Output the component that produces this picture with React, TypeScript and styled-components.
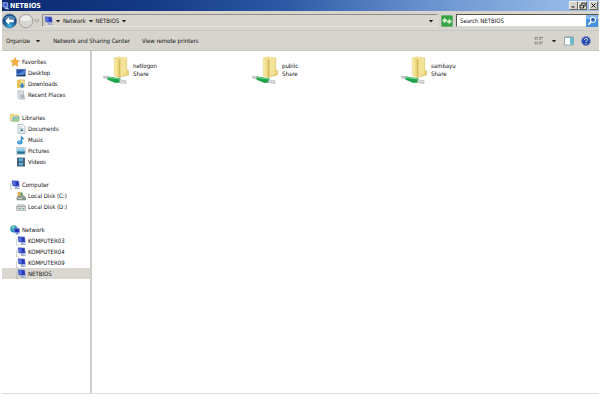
import React from "react";
import styled, { createGlobalStyle } from "styled-components";

const GlobalStyle = createGlobalStyle`
  * { box-sizing: border-box; }
  body { margin: 0; background: #fff; }
  body, button, input { font-family: "DejaVu Sans Condensed", "Noto Sans", sans-serif; font-size: 6px; color: #111; }
`;

const Window = styled.div`
  margin: 0 6px 0 2px;
  height: calc(100vh - 9px);
  display: flex;
  flex-direction: column;
  border-bottom: 1px solid #dcdcdc;
`;

const TitleBar = styled.header`
  height: 11px;
  flex: none;
  display: flex;
  align-items: center;
  padding: 0 1px 0 0;
  background: linear-gradient(90deg, #0c2a70 0%, #143a86 25%, #2f5ba6 48%, #6b94d0 72%, #9fc2ec 100%);
`;

const Title = styled.h1`
  margin: 0 auto 0 0;
  font-size: 7px;
  line-height: 10px;
  font-weight: 700;
  color: #fff;
`;

const WindowButton = styled.button<{ $apart?: boolean }>`
  width: 9px;
  height: 9px;
  padding: 0;
  margin-left: ${(p) => (p.$apart ? "2px" : "0")};
  display: grid;
  place-items: center;
  background: #d6d3cb;
  border: 1px solid;
  border-color: #f4f2ee #66635c #66635c #f4f2ee;
`;

const AddressRow = styled.div`
  height: 20px;
  flex: none;
  display: flex;
  align-items: center;
  background: #d7d4cd;
  border-bottom: 1px solid #c6c8c8;
`;

const IconButton = styled.button`
  padding: 0;
  border: 0;
  background: none;
  display: flex;
  align-items: center;
  justify-content: center;
  flex: none;
`;

const AddressBox = styled.nav`
  flex: 1;
  height: 13px;
  margin: 0 3px 0 2px;
  padding: 0 3px 0 0;
  display: flex;
  align-items: center;
  gap: 2px;
  border: 1px solid;
  border-color: #8f8e88 #dedbd4 #e6e3dd #8f8e88;
  background: #dad7d0;
`;

const Crumb = styled.a`
  color: inherit;
  text-decoration: none;
  line-height: 10px;
`;

const DropEnd = styled(IconButton)`
  margin-left: auto;
`;

const SearchBox = styled.div`
  width: 143px;
  height: 13px;
  margin-left: 3px;
  display: flex;
  align-items: center;
  border: 1px solid;
  border-color: #55544f #d8d8d4 #d8d8d4 #55544f;
  background: #fff;
`;

const SearchInput = styled.input`
  flex: 1;
  min-width: 0;
  padding: 0 3px;
  border: 0;
  outline: 0;
  background: none;
  line-height: 10px;
  &::placeholder { color: #111; opacity: 1; }
`;

const CommandBar = styled.div`
  height: 20px;
  flex: none;
  display: flex;
  align-items: center;
  padding: 0 8px 0 4px;
  gap: 12px;
  background: #d7d4cd;
  border-bottom: 1px solid #c9c6c0;
`;

const Command = styled.button`
  padding: 0;
  border: 0;
  background: none;
  display: flex;
  align-items: center;
  gap: 5px;
  line-height: 10px;
  white-space: nowrap;
`;

const Tools = styled.div`
  margin-left: auto;
  display: flex;
  align-items: center;
  gap: 7px;
`;

const Body = styled.div`
  flex: 1;
  display: flex;
  min-height: 0;
`;

const Sidebar = styled.nav`
  width: 90px;
  flex: none;
  padding-top: 5px;
  display: flex;
  flex-direction: column;
  gap: 12px;
  border-right: 2px solid #cfcdca;
`;

const List = styled.ul`
  list-style: none;
  margin: 0;
  padding: 0;
`;

const TreeLink = styled.a<{ $level: number; $selected?: boolean }>`
  height: 11px;
  padding-left: ${(p) => (p.$level ? "14px" : "8px")};
  display: flex;
  align-items: center;
  gap: 2px;
  line-height: 11px;
  color: inherit;
  text-decoration: none;
  white-space: nowrap;
  background: ${(p) => (p.$selected ? "#d9d7d0" : "transparent")};
`;

const Content = styled.main`
  flex: 1;
  padding: 3px 11px;
`;

const ShareGrid = styled(List)`
  display: grid;
  grid-template-columns: repeat(auto-fill, 149px);
`;

const ShareLink = styled.a`
  display: flex;
  align-items: center;
  gap: 2px;
  height: 31px;
  color: inherit;
  text-decoration: none;
  line-height: 8px;
`;

const ShareText = styled.span`
  display: flex;
  flex-direction: column;
`;

const Svg = styled.svg<{ $size?: number }>`
  width: ${(p) => p.$size ?? 10}px;
  height: ${(p) => p.$size ?? 10}px;
  flex: none;
  display: block;
`;

const Arrow = ({ outline = false }: { outline?: boolean }) => (
  <Svg $size={6} viewBox="0 0 6 6" aria-hidden>
    <path d="M.8 2h4.4L3 4.6z" fill={outline ? "#f2f1ee" : "#222"} stroke={outline ? "#77756f" : "none"} strokeWidth=".6" />
  </Svg>
);

const Monitor = () => (
  <>
    <path d="M.7 2.8v6.5M.4 9.3h1.8" stroke="#a8abae" strokeWidth=".6" fill="none" />
    <path d="M1.9.6l6.9.3.6 5.5-6.9-.4z" fill="#2438b8" stroke="#98a6d4" strokeWidth=".5" />
    <path d="M2.6 1.2l2.8.1.4 3.9-2.8-.2z" fill="#5670e4" />
    <path d="M5 6.3l2 .2.3.9 2.4.3-.3 1.4-4.8-.4z" fill="#98a4cc" />
  </>
);

type IconName =
  | "star" | "desktop" | "downloads" | "recent" | "libraries" | "document" | "music"
  | "pictures" | "videos" | "computer" | "diskC" | "diskD" | "network";

const shapes: Record<IconName, React.ReactNode> = {
  star: <path d="M5 .5l1.3 3 3.2.3-2.4 2.1.8 3.3L5 7.5 2.1 9.2l.8-3.3L.5 3.8l3.2-.3z" fill="#f7b03c" stroke="#d8872a" strokeWidth=".5" />,
  desktop: (
    <>
      <rect x=".5" y="1.2" width="9" height="7" fill="#2452a8" stroke="#7288ae" strokeWidth=".6" />
      <path d="M1 5.5C4 5.6 6 4 9 2v3.5L6 7H1z" fill="#4e88da" />
      <path d="M1 7.5h8" stroke="#1c3155" />
    </>
  ),
  downloads: (
    <>
      <path d="M1 1.2l3-.7v8L1 9.3z" fill="#e5c45a" />
      <path d="M4 .8h4.5v7.5L4 9z" fill="#f2dc87" stroke="#c9a949" strokeWidth=".4" />
      <path d="M5.2 4.2h2v2h1.5L6.2 9.5 3.6 6.2h1.6z" fill="#2a7ed2" />
    </>
  ),
  recent: (
    <>
      <path d="M2 .8h5.5v6.5L9 9H3L2 7z" fill="#e8eaec" stroke="#9ba0a5" strokeWidth=".6" />
      <path d="M3.2 2.6h3M3.2 4.2h2" stroke="#a9b1b8" strokeWidth=".6" />
      <circle cx="6.3" cy="6.5" r="2" fill="#c7d3dc" stroke="#858d94" strokeWidth=".5" />
      <path d="M6.3 5.3v1.3h1" stroke="#596470" strokeWidth=".5" fill="none" />
    </>
  ),
  libraries: (
    <>
      <path d="M.5 1h3.2l.7 1h4.4v6h-8.3z" fill="#f0d878" stroke="#cdb35c" strokeWidth=".4" />
      <path d="M2.6 3.4h7l-.7 5.4h-7z" fill="#74bedb" stroke="#e6dba0" strokeWidth=".5" />
      <path d="M3 7.2c2-2 3-2 5.7-1.8L8.3 8.3H2.6z" fill="#a4ce80" />
    </>
  ),
  document: (
    <>
      <path d="M2 .6h5l2 2v6.8H2z" fill="#fafcfc" stroke="#7c8f9b" strokeWidth=".6" />
      <path d="M3.3 3h2.4M3.3 4.6h4.2M3.3 7.8h4.2" stroke="#7fa0ae" strokeWidth=".6" />
      <path d="M4.4 5.4h2.8v1.6H4.4z" fill="#3c7c92" />
    </>
  ),
  music: (
    <>
      <path d="M5 .3c.4 2 3.4 2.2 3.2 5.2-.5-1.3-1.3-1.7-2-1.8v3.9H4.8V.3z" fill="#2480c4" />
      <ellipse cx="3.8" cy="7.3" rx="2.7" ry="2.1" fill="#3a9ad8" />
      <ellipse cx="3.3" cy="6.8" rx="1" ry=".6" fill="#a9daf4" />
    </>
  ),
  pictures: (
    <>
      <rect x=".5" y="1.5" width="9" height="7" fill="#f5f7f8" stroke="#9da9b0" strokeWidth=".5" />
      <rect x="1.3" y="2.3" width="7.4" height="5.4" fill="#8acbe8" />
      <path d="M1.3 5.4c2-.8 3.5 1 7.4-.3v2.6H1.3z" fill="#226a88" />
    </>
  ),
  videos: (
    <>
      <rect x="1" y=".6" width="8" height="8.8" fill="#28435d" />
      <path d="M2.9 1.2h4.2v3.3H2.9zM2.9 5.4h4.2v3.2H2.9z" fill="#60add8" />
      <path d="M1.9 1v8M8.1 1v8" stroke="#d5e2ea" strokeWidth=".7" strokeDasharray=".8 .8" />
    </>
  ),
  computer: <Monitor />,
  diskC: (
    <>
      <path d="M1 6.2l1.2-1.4h5.6L9.6 6.4v2.5H1z" fill="#9aa39c" stroke="#59625f" strokeWidth=".5" />
      <path d="M1.6 1.3l2.6-.7.2 3.8-2.6.5z" fill="#e2a849" />
      <path d="M4.5 1l2.5 1-.4 3-2.3-.5z" fill="#57a05c" />
      <path d="M2 7.6h4" stroke="#e8ece9" strokeWidth=".7" />
      <rect x="7.3" y="7" width="1.2" height="1" fill="#49b850" />
    </>
  ),
  diskD: (
    <>
      <path d="M.6 4.4l1.4-1.6h5.9l1.7 1.8v3.8h-9z" fill="#dfe1e2" stroke="#888e92" strokeWidth=".6" />
      <path d="M.8 4.6h8.6M2 6.6h3.4" stroke="#7d8589" strokeWidth=".7" />
      <rect x="6.7" y="6" width="1.5" height="1.2" fill="#4ca678" />
    </>
  ),
  network: (
    <>
      <circle cx="3.8" cy="3.8" r="3.6" fill="#2c93c2" />
      <path d="M1.4 2.2C3 .2 5 .8 5.2 1.6 5 3 3.2 2.6 3 4.2 2 4.4 1 3.5 1.4 2.2z" fill="#74cf9c" />
      <path d="M4.2 3.2l5.2.3.3 4.3-5.2-.3z" fill="#2032b4" stroke="#91a0d8" strokeWidth=".5" />
      <path d="M6 8h2l1 1.4H5.3z" fill="#8593bc" />
    </>
  ),
};

const Icon = ({ name }: { name: IconName }) => (
  <Svg viewBox="0 0 10 10" aria-hidden>{shapes[name]}</Svg>
);

const ShareIcon = () => (
  <Svg $size={28} viewBox="0 0 28 28" aria-hidden>
    <defs>
      <linearGradient id="folder" x1="0" x2="1">
        <stop offset="0" stopColor="#fbeeb0" />
        <stop offset=".55" stopColor="#f3df8a" />
        <stop offset="1" stopColor="#e3c766" />
      </linearGradient>
    </defs>
    <path d="M15.5 1l8.2 1v11.6l2 1.5v3.8l-10 2.7z" fill="#e9ce70" stroke="#d0b660" strokeWidth=".4" />
    <path d="M11.2 1.8L15.5.6l7.6 1.4.2 16-7.6 3.4z" fill="#f4e296" />
    <path d="M11.2 1.8l5.6 1.7v18.3l-5.6-2.4z" fill="url(#folder)" stroke="#dcc270" strokeWidth=".4" />
    <path d="M16.8 3.6v17.8" stroke="#bfa048" strokeWidth=".6" />
    <path d="M.4 20l6 .8v2.7L.6 22z" fill="#cdd2ce" stroke="#989f9a" strokeWidth=".4" />
    <path d="M4.6 20.6l12.8 1.6v4.4l-5 .3-7.8-3.2z" fill="#1ea54c" />
    <path d="M5 20.9l12.2 1.6v1.1L5 22z" fill="#71d68d" />
    <path d="M16.5 23.8l6.5 1 .1 2.6-6.4-.7z" fill="#dce0dd" stroke="#9ba29c" strokeWidth=".5" />
  </Svg>
);

type Entry = { label: string; icon: IconName; selected?: boolean };
const groups: Array<Entry & { children: Entry[] }> = [
  {
    label: "Favorites", icon: "star", children: [
      { label: "Desktop", icon: "desktop" },
      { label: "Downloads", icon: "downloads" },
      { label: "Recent Places", icon: "recent" },
    ],
  },
  {
    label: "Libraries", icon: "libraries", children: [
      { label: "Documents", icon: "document" },
      { label: "Music", icon: "music" },
      { label: "Pictures", icon: "pictures" },
      { label: "Videos", icon: "videos" },
    ],
  },
  {
    label: "Computer", icon: "computer", children: [
      { label: "Local Disk (C:)", icon: "diskC" },
      { label: "Local Disk (D:)", icon: "diskD" },
    ],
  },
  {
    label: "Network", icon: "network", children: [
      { label: "KOMPUTER03", icon: "computer" },
      { label: "KOMPUTER04", icon: "computer" },
      { label: "KOMPUTER09", icon: "computer" },
      { label: "NETBIOS", icon: "computer", selected: true },
    ],
  },
];
const shares = ["netlogon", "public", "sambayu"];

export default function App() {
  return (
    <>
      <GlobalStyle />
      <Window>
        <TitleBar>
          <Svg viewBox="0 0 10 10" $size={8} aria-hidden>
            <path d="M1 .8l6 .2.3 5.6-6-.4z" fill="#4260da" stroke="#d5def5" strokeWidth=".8" />
            <path d="M4 7h2l2.7 1-.4 1.3-5-.5z" fill="#b3bfdd" />
          </Svg>
          <Title>NETBIOS</Title>
          <WindowButton aria-label="Minimize">
            <Svg $size={7} viewBox="0 0 7 7"><path d="M1.5 5h3" stroke="#111" /></Svg>
          </WindowButton>
          <WindowButton aria-label="Restore">
            <Svg $size={7} viewBox="0 0 7 7"><path d="M2.7 2.5V1h3.5v3H5M1 3.2h3.5V6H1z" fill="none" stroke="#111" strokeWidth=".8" /></Svg>
          </WindowButton>
          <WindowButton $apart aria-label="Close">
            <Svg $size={7} viewBox="0 0 7 7"><path d="M1.5 1.5l4 4M5.5 1.5l-4 4" stroke="#111" /></Svg>
          </WindowButton>
        </TitleBar>

        <AddressRow>
          <IconButton aria-label="Back">
            <Svg $size={16} viewBox="0 0 16 16">
              <defs>
                <radialGradient id="back" cy=".85">
                  <stop offset="0" stopColor="#3cb4e6" />
                  <stop offset="1" stopColor="#174a86" />
                </radialGradient>
              </defs>
              <circle cx="7.6" cy="8" r="7.1" fill="url(#back)" stroke="#64809c" strokeWidth=".7" />
              <path d="M2 6a6 5 0 0 1 11.2 0C10 7.5 5 7.5 2 6z" fill="#7eb0d6" opacity=".6" />
              <path d="M3.2 8l4-3.7v2.4h4.7v2.6H7.2v2.4z" fill="#fff" />
            </Svg>
          </IconButton>
          <IconButton aria-label="Forward">
            <Svg $size={16} viewBox="0 0 16 16">
              <circle cx="8" cy="8" r="6.9" fill="#d7d6d3" stroke="#96958f" strokeWidth=".8" />
              <path d="M2.5 7a5.6 5.3 0 0 1 11 0C10 8.2 6 8.2 2.5 7z" fill="#f0efed" />
            </Svg>
          </IconButton>
          <IconButton aria-label="Recent pages"><Arrow outline /></IconButton>
          <AddressBox aria-label="Address">
            <Icon name="computer" />
            <Arrow />
            <Crumb href="#network">Network</Crumb>
            <Arrow />
            <Crumb href="#netbios">NETBIOS</Crumb>
            <Arrow />
            <DropEnd aria-label="Previous locations"><Arrow /></DropEnd>
          </AddressBox>
          <IconButton aria-label="Refresh">
            <Svg $size={12} viewBox="0 0 12 12">
              <rect x=".5" y=".5" width="11" height="11" rx="1" fill="#36a443" stroke="#6fae75" />
              <path d="M1.2 5.4l3-3v1.8h1.6v2.4H4.2v1.8zM10.8 6.6l-3 3V7.8H6.2V5.4h1.6V3.6z" fill="#d8f6d6" />
            </Svg>
          </IconButton>
          <SearchBox>
            <SearchInput aria-label="Search NETBIOS" placeholder="Search NETBIOS" />
            <IconButton aria-label="Search">
              <Svg $size={12} viewBox="0 0 12 12">
                <rect width="12" height="12" fill="#4790dc" />
                <path d="M0 0h12v4H0z" fill="#82b6ec" />
                <circle cx="7" cy="4.8" r="2.5" fill="#295bb0" stroke="#fff" strokeWidth="1.1" />
                <path d="M5.2 6.8L2.4 9.6" stroke="#fff" strokeWidth="1.5" />
              </Svg>
            </IconButton>
          </SearchBox>
        </AddressRow>

        <CommandBar>
          <Command>Organize <Arrow /></Command>
          <Command>Network and Sharing Center</Command>
          <Command>View remote printers</Command>
          <Tools>
            <IconButton aria-label="View layout">
              <Svg viewBox="0 0 10 10">
                <path d="M1 1.3h2.5v2H1zM1 6h2.5v2H1z" fill="#d4e1e7" stroke="#6f787b" strokeWidth=".7" />
                <path d="M5 1.5h4M5 3.2h2.5M5 6.2h4M5 8h2.5" stroke="#6d716b" strokeWidth=".8" />
              </Svg>
            </IconButton>
            <IconButton aria-label="View options"><Arrow /></IconButton>
            <IconButton aria-label="Preview pane">
              <Svg viewBox="0 0 10 10">
                <rect x=".5" y="1" width="9" height="8" fill="#fff" stroke="#6c929f" strokeWidth=".7" />
                <path d="M6 1.4h3.1v7.2H6z" fill="#69b8d0" />
                <path d="M.8 1.4h8.4" stroke="#8da9b4" />
              </Svg>
            </IconButton>
            <IconButton aria-label="Help">
              <Svg viewBox="0 0 10 10">
                <circle cx="5" cy="5" r="4.5" fill="#2449aa" stroke="#7d94c6" strokeWidth=".6" />
                <path d="M3.5 3.9c0-2 3.1-1.9 3.1-.2C6.6 4.8 5 4.8 5 6M5 7.1v1" fill="none" stroke="#fff" strokeWidth="1" />
              </Svg>
            </IconButton>
          </Tools>
        </CommandBar>

        <Body>
          <Sidebar aria-label="Folders">
            {groups.map((g) => (
              <List key={g.label}>
                <li>
                  <TreeLink $level={0} href="#"><Icon name={g.icon} />{g.label}</TreeLink>
                  <List>
                    {g.children.map((c) => (
                      <li key={c.label}>
                        <TreeLink $level={1} $selected={c.selected} href="#"><Icon name={c.icon} />{c.label}</TreeLink>
                      </li>
                    ))}
                  </List>
                </li>
              </List>
            ))}
          </Sidebar>
          <Content>
            <ShareGrid>
              {shares.map((s) => (
                <li key={s}>
                  <ShareLink href="#">
                    <ShareIcon />
                    <ShareText><span>{s}</span><span>Share</span></ShareText>
                  </ShareLink>
                </li>
              ))}
            </ShareGrid>
          </Content>
        </Body>
      </Window>
    </>
  );
}
